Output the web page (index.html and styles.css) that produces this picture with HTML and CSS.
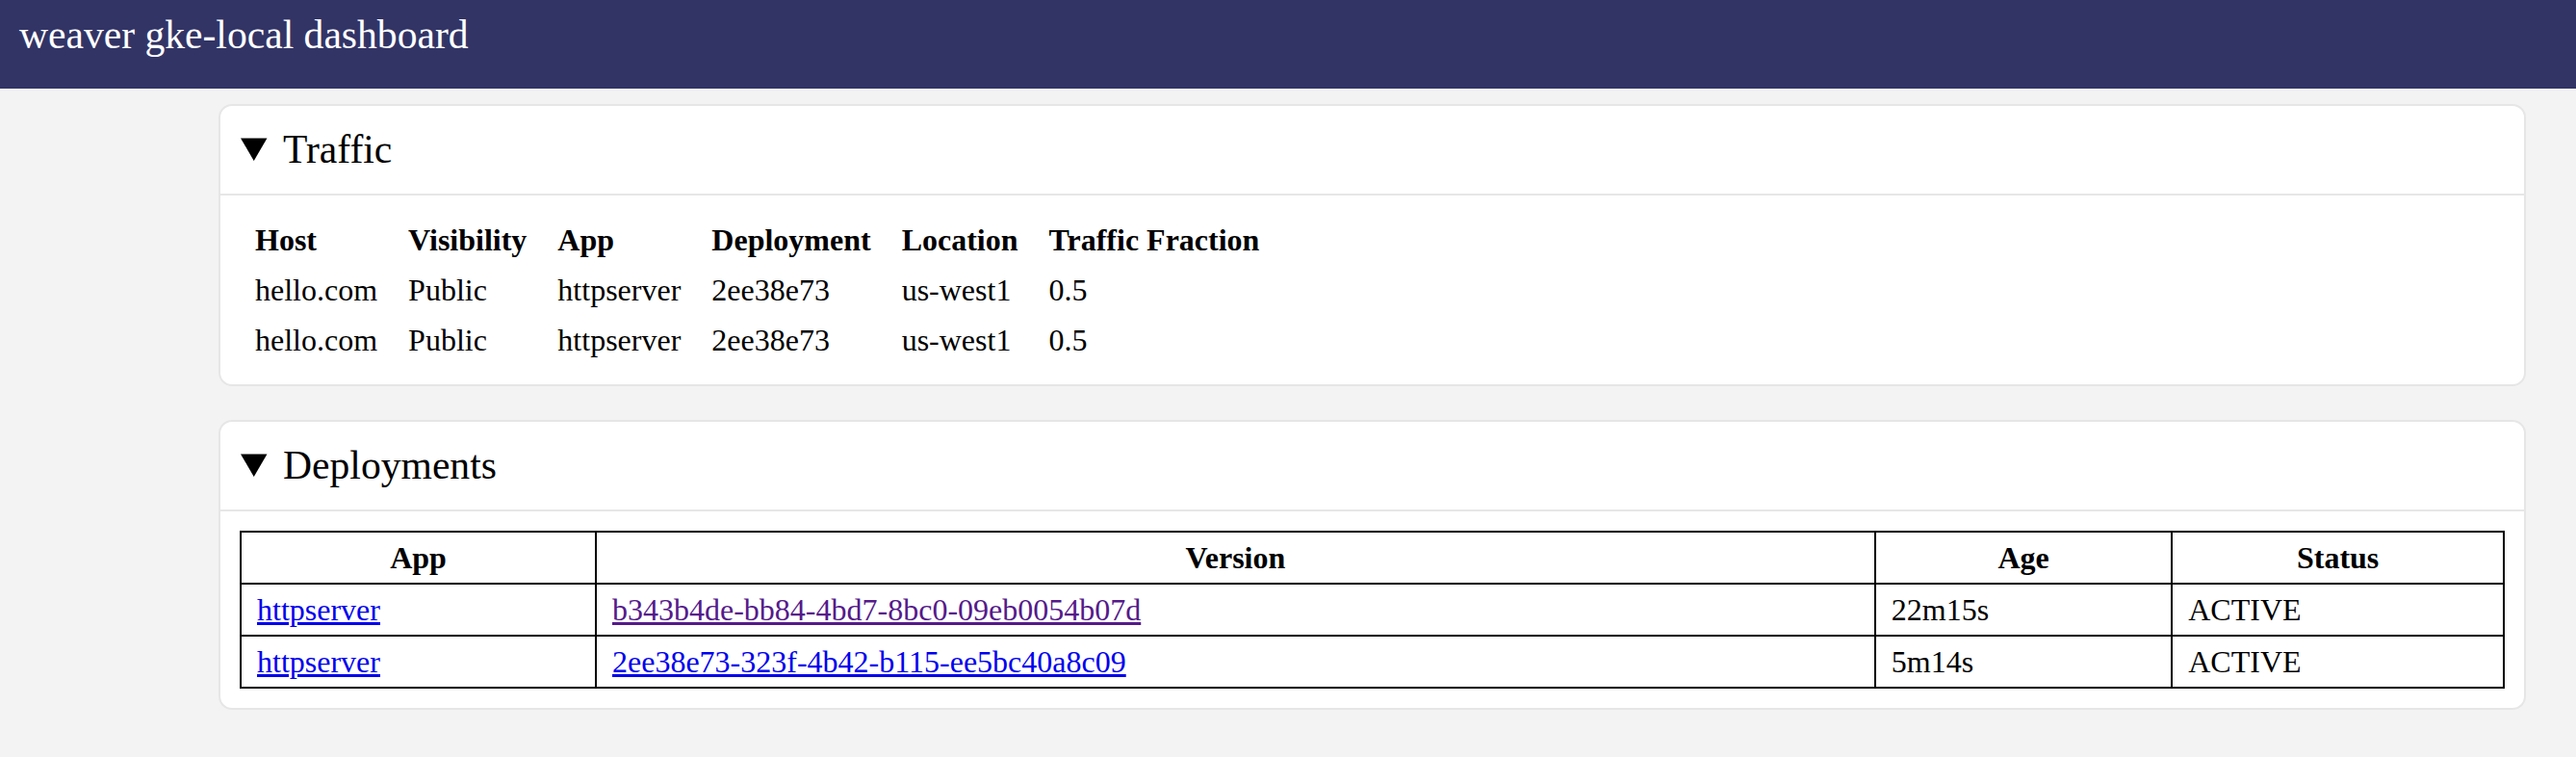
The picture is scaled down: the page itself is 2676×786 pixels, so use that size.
FILE: index.html
```html
<!DOCTYPE html>
<html lang="en">
<head>
    <meta charset="UTF-8">
    <title>weaver gke-local dashboard</title>
    <link rel="stylesheet" href="styles.css">
</head>
<body>

<div class="header">
    <h1>weaver gke-local dashboard</h1>
</div>

<div class="main">
    <details class="card" open>
        <summary>Traffic</summary>
        <div class="card-body">
            <table class="traffic">
                <thead>
                    <tr>
                        <th>Host</th>
                        <th>Visibility</th>
                        <th>App</th>
                        <th>Deployment</th>
                        <th>Location</th>
                        <th>Traffic Fraction</th>
                    </tr>
                </thead>
                <tbody>
                    <tr>
                        <td>hello.com</td>
                        <td>Public</td>
                        <td>httpserver</td>
                        <td>2ee38e73</td>
                        <td>us-west1</td>
                        <td>0.5</td>
                    </tr>
                    <tr>
                        <td>hello.com</td>
                        <td>Public</td>
                        <td>httpserver</td>
                        <td>2ee38e73</td>
                        <td>us-west1</td>
                        <td>0.5</td>
                    </tr>
                </tbody>
            </table>
        </div>
    </details>

    <details class="card" open>
        <summary>Deployments</summary>
        <div class="card-body">
            <table class="deployments">
                <thead>
                    <tr>
                        <th>App</th>
                        <th>Version</th>
                        <th>Age</th>
                        <th>Status</th>
                    </tr>
                </thead>
                <tbody>
                    <tr>
                        <td><a href="#app">httpserver</a></td>
                        <td><a class="visited" href="#b343b4de">b343b4de-bb84-4bd7-8bc0-09eb0054b07d</a></td>
                        <td>22m15s</td>
                        <td>ACTIVE</td>
                    </tr>
                    <tr>
                        <td><a href="#app">httpserver</a></td>
                        <td><a href="#2ee38e73">2ee38e73-323f-4b42-b115-ee5bc40a8c09</a></td>
                        <td>5m14s</td>
                        <td>ACTIVE</td>
                    </tr>
                </tbody>
            </table>
        </div>
    </details>
</div>

</body>
</html>
```

FILE: styles.css
```css
body {
    font-family: "Liberation Serif", "Times New Roman", serif;
    font-size: 32px;
    margin: 0;
    padding: 0;
    background-color: #f3f3f3;
    color: #000;
}
.header {
    height: 92px;
    box-sizing: border-box;
    padding: 12px 20px;
    background-color: #323466;
    color: #fff;
}
.header h1 {
    margin: 0;
    font-size: 41.6px;
    font-weight: normal;
    line-height: 48px;
}
.main {
    display: flex;
    flex-direction: column;
    gap: 35px;
    padding: 16px 52px 40px 227px;
}
.card {
    background-color: #fff;
    border: 2px solid #e6e6e6;
    border-radius: 14px;
}
.card summary {
    font-size: 41.6px;
    line-height: 48px;
    padding: 21px 21px 22px;
    border-bottom: 2px solid #e6e6e6;
    cursor: pointer;
}
.card-body {
    padding: 20px;
}
table {
    border-collapse: collapse;
}
th, td {
    padding: 8px 16px;
    line-height: 36px;
}
.traffic th {
    text-align: left;
}
.deployments {
    width: 100%;
}
.deployments th, .deployments td {
    border: 2px solid #000;
}
.deployments td {
    text-align: left;
}
a {
    color: #0000ee;
}
a.visited {
    color: #551a8b;
}
```
